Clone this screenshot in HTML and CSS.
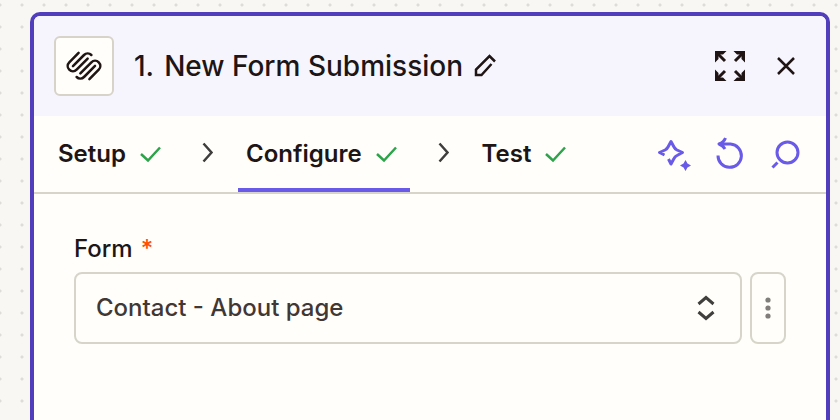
FILE: index.html
```html
<!doctype html>
<html lang="en">
<head>
<meta charset="utf-8">
<meta name="viewport" content="width=device-width, initial-scale=1">
<title>New Form Submission</title>
<link rel="stylesheet" href="styles.css">
</head>
<body>
<main class="panel">
	<header class="panel-header">
		<div class="app-logo">
			<svg width="36" height="36" viewBox="0 0 24 24" aria-hidden="true">
				<path d="M9.570 16.900L16.920 9.540A3.470 3.470 0 0 1 21.830 14.460L15.600 20.700"/>
				<path d="M19.350 11.980L12 19.340A3.470 3.470 0 0 1 7.100 19.340"/>
				<path d="M4.650 12.020L12 4.660A3.470 3.470 0 0 1 16.900 4.660"/>
				<path d="M14.430 7.100L7.080 14.460A3.470 3.470 0 0 1 2.170 9.540L8.400 3.300"/>
			</svg>
		</div>
		<h1 class="panel-title"><span>1.</span> <span>New Form Submission</span></h1>
		<button class="icon-button" type="button" aria-label="Rename">
			<svg class="thin" width="32" height="32" viewBox="0 0 32 32"><path d="M26 11.500L20.500 6L7 19.500V25H12.500L22.500 14"/></svg>
		</button>
		<div class="actions">
			<button class="icon-button" type="button" aria-label="Expand">
				<svg width="32" height="32" viewBox="0 0 32 32">
					<path d="M3 3L11 11M29 3L21 11M3 29L11 21M29 29L21 21"/>
					<path class="solid" d="M1 1H12.500L9 4.500H4.500V9L1 12.500ZM31 1H19.500L23 4.500H27.500V9L31 12.500ZM1 31H12.500L9 27.500H4.500V23L1 19.500ZM31 31H19.500L23 27.500H27.500V23L31 19.500Z"/>
				</svg>
			</button>
			<button class="icon-button" type="button" aria-label="Close">
				<svg class="thin" width="32" height="32" viewBox="0 0 32 32"><path d="M8 8L24 24M24 8L8 24"/></svg>
			</button>
		</div>
	</header>

	<nav class="steps" aria-label="Steps">
		<button class="step" type="button">Setup
			<svg class="check thin" width="32" height="32" viewBox="0 0 32 32"><path d="M7 16L14 22.500L26 9.500"/></svg>
		</button>
		<svg class="chevron thin" width="64" height="32" viewBox="0 0 64 32" aria-hidden="true"><path d="M29.500 5.500L37.500 14.500L29.500 23.500"/></svg>
		<button class="step active" type="button" aria-current="step">Configure
			<svg class="check thin" width="32" height="32" viewBox="0 0 32 32"><path d="M7 16L14 22.500L26 9.500"/></svg>
		</button>
		<svg class="chevron thin" width="64" height="32" viewBox="0 0 64 32" aria-hidden="true"><path d="M29.500 5.500L37.500 14.500L29.500 23.500"/></svg>
		<button class="step" type="button">Test
			<svg class="check thin" width="32" height="32" viewBox="0 0 32 32"><path d="M7 16L14 22.500L26 9.500"/></svg>
		</button>
		<div class="actions tools">
			<button class="icon-button" type="button" aria-label="Ask AI">
				<svg width="32" height="32" viewBox="0 0 32 32">
					<path d="M6.500 17L1.500 14.500L7 12Q9 11 10 9L13 3.500L16 9Q17 11 19 12L24.500 14.500L19 17.500Q17 18.500 16 20.500L13 26L10.500 21"/>
					<path class="solid" d="M27.500 22L29.500 25.500L33 27.500L29.500 29.500L27.500 33L25.500 29.500L22 27.500L25.500 25.500Z"/>
				</svg>
			</button>
			<button class="icon-button" type="button" aria-label="Reset">
				<svg width="32" height="32" viewBox="0 0 32 32"><path d="M11.500 0Q10 4 5 6Q9 7.500 11 11M5 6H16.500A11.700 11.700 0 1 1 4 17.500"/></svg>
			</button>
			<button class="icon-button" type="button" aria-label="Search">
				<svg width="32" height="32" viewBox="0 0 32 32"><circle cx="17.500" cy="14.500" r="10.500"/><path d="M7.500 24.500L2.500 29.500"/></svg>
			</button>
		</div>
	</nav>

	<form class="fields">
		<label class="field-label" for="form-id">Form <span class="required">*</span></label>
		<div class="field-row">
			<div class="select-wrap">
				<select id="form-id" required>
					<option>Contact - About page</option>
				</select>
				<svg class="select-arrows" width="32" height="32" viewBox="0 0 32 32" aria-hidden="true"><path d="M8.500 12L16 5.500L23.500 12M8.500 20L16 26.500L23.500 20"/></svg>
			</div>
			<button class="more" type="button" aria-label="More options">
				<svg width="8" height="24" viewBox="0 0 8 24"><circle cx="4" cy="4" r="2.600"/><circle cx="4" cy="12" r="2.600"/><circle cx="4" cy="20" r="2.600"/></svg>
			</button>
		</div>
	</form>
</main>
</body>
</html>
```
FILE: styles.css
```css
* {
	box-sizing: border-box;
}

body {
	margin: 0;
	padding: 12px 10px 0 30px;
	min-height: 100vh;
	display: flex;
	font-family: Inter, "Liberation Sans", sans-serif;
	font-size: 24px;
	line-height: 32px;
	color: #201515;
	background: #f8f7f4 radial-gradient(circle at 11px 11px, #dddcd8 1px, transparent 2px) -11px -6px / 22px 22px;
}

button, select {
	font: inherit;
	color: inherit;
	background: none;
	border: 0;
	margin: 0;
	padding: 0;
}

svg {
	display: block;
	flex: none;
	overflow: visible;
	fill: none;
	stroke: currentColor;
	stroke-width: 3;
}

.thin {
	stroke-width: 2.5;
}

.solid {
	fill: currentColor;
	stroke: none;
}

.panel {
	flex: 1;
	min-width: 0;
	border: 4px solid #503ebd;
	border-bottom: 0;
	border-radius: 10px 10px 0 0;
	background: #fffefb;
	overflow: hidden;
}

.panel-header {
	display: flex;
	align-items: center;
	padding: 20px 24px 20px 20px;
	background: #f6f5fd;
}

.app-logo {
	display: grid;
	place-items: center;
	width: 60px;
	height: 60px;
	border: 2px solid #d7d3c9;
	border-radius: 6px;
	background: #fffefb;
}

.app-logo svg {
	stroke-width: 1.7;
	stroke-linecap: round;
}

.panel-title {
	display: flex;
	gap: 10px;
	margin: 0 6px 0 20px;
	font-size: 28px;
	font-weight: 500;
}

.actions {
	display: flex;
	gap: 24px;
	margin-left: auto;
}

.steps {
	display: flex;
	align-items: center;
	padding: 0 24px 0 16px;
	border-bottom: 2px solid #d7d5c9;
}

.step {
	display: flex;
	align-items: center;
	gap: 8px;
	height: 76px;
	padding: 4px 8px 0;
	border-bottom: 4px solid transparent;
	font-weight: 600;
}

.step.active {
	border-bottom-color: #695be8;
}

.check {
	color: #2da44a;
}

.chevron {
	color: #403d3d;
}

.tools {
	color: #695be8;
}

.tools svg {
	stroke-linejoin: round;
}

.fields {
	padding: 39px 40px;
}

.field-label {
	display: flex;
	gap: 8px;
	margin-bottom: 7px;
	font-weight: 500;
}

.required {
	color: #ff4f00;
}

.field-row {
	display: flex;
	gap: 8px;
}

.select-wrap {
	position: relative;
	flex: 1;
}

.select-wrap select {
	appearance: none;
	width: 100%;
	height: 72px;
	padding: 0 60px 0 20px;
	border: 2px solid #d7d5c9;
	border-radius: 8px;
	font-weight: 500;
	color: #413735;
}

.select-arrows {
	position: absolute;
	top: 20px;
	right: 20px;
	color: #413f3d;
	pointer-events: none;
}

.more {
	display: grid;
	place-items: center;
	width: 36px;
	border: 2px solid #d7d5c9;
	border-radius: 8px;
}

.more svg {
	fill: #807d7a;
	stroke: none;
}
```
